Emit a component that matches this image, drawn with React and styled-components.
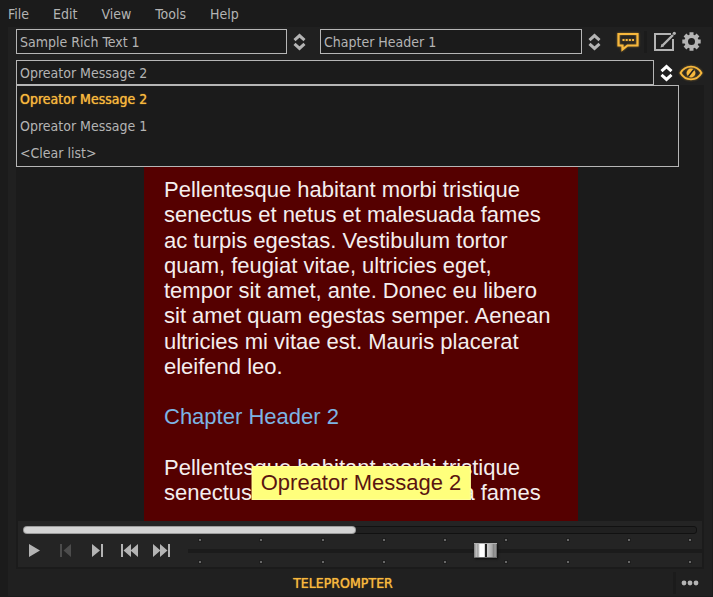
import React, { useState } from "react";
import styled, { createGlobalStyle, css } from "styled-components";

const ui = {
  window: "#1b1b1b",
  panel: "#202020",
  raised: "#242424",
  line: "#b6b6b6",
  text: "#b4b4b4",
  accent: "#f8b83c",
  page: "#550000",
};

const GlobalStyle = createGlobalStyle`
  *, *::before, *::after { box-sizing: border-box; }
  html, body, #root { height: 100%; }
  body {
    margin: 0;
    background: ${ui.window};
    color: ${ui.text};
    font: 14px/20px "DejaVu Sans Condensed", "Noto Sans", sans-serif;
  }
  button, input { font: inherit; color: inherit; }
`;

const Window = styled.div`
  display: flex;
  flex-direction: column;
  min-height: 100%;
  padding: 0 1px 1px 8px;
`;

const MenuBar = styled.nav`
  display: flex;
  gap: 24px;
  height: 27px;
  align-items: center;
`;

const PlainButton = styled.button`
  display: flex;
  align-items: center;
  justify-content: center;
  padding: 0;
  border: 0;
  background: none;
`;

const MenuButton = styled(PlainButton)`
  height: 20px;
`;

const Panel = styled.main`
  display: flex;
  flex: 1;
  flex-direction: column;
  padding: 2px 8px 0;
  background: ${ui.panel};
`;

const ToolRow = styled.div`
  display: flex;
  align-items: center;
  height: 25px;
  margin-bottom: ${(p) => (p.$last ? 0 : 6)}px;
  padding-right: ${(p) => (p.$last ? 1 : 2)}px;
`;

const Combo = styled.div`
  position: relative;
  display: flex;
  flex: ${(p) => p.$grow || 1} 1 0;
  min-width: 0;
  height: 25px;
  margin-right: ${(p) => p.$gap || 0}px;
`;

const ComboInput = styled.input`
  flex: 1;
  min-width: 0;
  padding: 0 3px;
  border: 1px solid ${ui.line};
  border-radius: 0;
  background: ${ui.window};
  outline: none;
`;

const ComboArrows = styled(PlainButton)`
  width: 25px;
  color: ${(p) => (p.$open ? "#ffffff" : ui.text)};
`;

const Options = styled.ul`
  position: absolute;
  z-index: 2;
  top: 100%;
  left: 0;
  right: 0;
  display: grid;
  gap: 1px;
  margin: 0;
  padding: 0;
  border: 1px solid ${ui.line};
  background: ${ui.window};
  list-style: none;
`;

const Option = styled.li`
  padding: 0 3px;
  line-height: 26px;
  cursor: default;
  ${(p) =>
    p.$selected &&
    css`
      color: ${ui.accent};
      text-shadow: 0 0 1px ${ui.accent};
    `}
`;

const IconButton = styled(PlainButton)`
  flex: none;
  width: ${(p) => p.$width}px;
  height: 25px;
  color: ${(p) => (p.$active ? ui.accent : ui.text)};
  svg { ${(p) => p.$active && css`filter: drop-shadow(0 0 1px #f8b83c80);`} }
`;

const Divider = styled.span`
  flex: none;
  width: 3px;
  height: 22px;
  margin-left: 3px;
  background: ${ui.window};
`;

const Viewport = styled.section`
  display: flex;
  flex: 1;
  justify-content: center;
  padding-left: 2px;
  background: ${ui.window};
`;

const Script = styled.article`
  position: relative;
  width: 434px;
  max-width: 100%;
  padding: 92px 20px 16px;
  overflow: hidden;
  background: ${ui.page};
  color: #f4eeee;
  font: 22px/1.15 "Liberation Sans", Arial, sans-serif;
`;

const Paragraph = styled.p`
  margin: 0;
`;

const ChapterTitle = styled.h2`
  margin: 25px 0;
  color: #7cb4e4;
  font: inherit;
`;

const OperatorMessage = styled.div`
  position: absolute;
  bottom: 21px;
  left: 50%;
  transform: translateX(-50%);
  padding: 0 8px;
  border: 1px solid #ffff99;
  background: #ffff7c;
  color: #5a1410;
  line-height: 32px;
  white-space: nowrap;
`;

const Transport = styled.section`
  padding: 5px 0 0;
  border: 2px solid ${ui.window};
  border-top: 0;
  background: ${ui.raised};
`;

const Progress = styled.div`
  height: 8px;
  margin: 0 5px;
  border: 1px solid #111111;
  border-radius: 3px;
  background: #202020;
`;

const ProgressFill = styled.div`
  height: 100%;
  border-radius: 3px;
  background: #d4d4d4;
  box-shadow: 0 0 0 1px #9c9c9c;
`;

const TransportRow = styled.div`
  display: flex;
  align-items: center;
  height: 33px;
`;

const TransportButton = styled(PlainButton)`
  flex: none;
  width: 32px;
  height: 24px;
  color: ${ui.text};
  &:disabled { color: #4c4c4c; }
`;

const Speed = styled.div`
  display: flex;
  flex: 1;
  flex-direction: column;
  gap: 1px;
  min-width: 0;
  margin-left: 10px;
`;

const Ticks = styled.div`
  display: flex;
  justify-content: space-between;
  padding: 0 11px;
`;

const Tick = styled.i`
  width: 2px;
  height: 2px;
  background: #666666;
  box-shadow: 0 0 0 1px #1e1e1e;
`;

const SpeedSlider = styled.input`
  width: 100%;
  height: 18px;
  margin: 0;
  appearance: none;
  background: none;
  &::-webkit-slider-runnable-track {
    height: 4px;
    background: ${ui.window};
  }
  &::-webkit-slider-thumb {
    appearance: none;
    width: 23px;
    height: 15px;
    margin-top: -6px;
    border-top: 1px solid #b0b0b0;
    border-bottom: 1px solid #6a6a6a;
    background: linear-gradient(
      90deg,
      #8c8c8c 0 1px, #c8c8c8 2px, #9c9c9c 4px, #ffffff 6px 10px,
      #b0b0b0 11px, #202020 11px 13px, #d0d0d0 13px, #a8a8a8 18px,
      #7c7c7c 20px, #a8a8a8 21px, #585858 23px
    );
    box-shadow: 1px 1px 2px #0e0e0e;
  }
`;

const Footer = styled.footer`
  display: flex;
  align-items: center;
  height: 27px;
`;

const FooterTitle = styled.strong`
  flex: 1;
  color: ${ui.accent};
  font-weight: 400;
  text-align: center;
  text-shadow: 0 0 1px ${ui.accent};
`;

function Arrows() {
  return (
    <svg width="13" height="18" viewBox="0 0 13 18" fill="none" stroke="currentColor" strokeWidth="3">
      <path d="M1.5 7.2l5-4.6 5 4.6M1.5 10.8l5 4.6 5-4.6" />
    </svg>
  );
}

function ComboBox({ label, value, grow, gap, options }) {
  const [text, setText] = useState(value);
  return (
    <Combo $grow={grow} $gap={gap}>
      <ComboInput aria-label={label} value={text} onChange={(e) => setText(e.target.value)} />
      <ComboArrows type="button" $open={!!options} aria-label={`${label} list`}>
        <Arrows />
      </ComboArrows>
      {options && (
        <Options role="listbox" aria-label={label}>
          {options.map((o) => (
            <Option key={o} role="option" aria-selected={o === text} $selected={o === text} onClick={() => setText(o)}>
              {o}
            </Option>
          ))}
        </Options>
      )}
    </Combo>
  );
}

function MessageIcon() {
  return (
    <svg width="24" height="20" viewBox="0 0 24 20" fill="none" stroke="currentColor">
      <path d="M2.5 2h19v11.5H11.5l-5 4v-4h-4z" strokeWidth="2.2" />
      <path d="M6.5 8h11.5" strokeWidth="2" strokeDasharray="2 1.2" />
    </svg>
  );
}

function EditIcon() {
  return (
    <svg width="24" height="22" viewBox="0 0 24 22" fill="none" stroke="currentColor">
      <path d="M19 3H3v16h18V8" strokeWidth="2" />
      <path d="M10.5 14.5 21 4" strokeWidth="2.4" />
      <path d="M8.5 16.5l1-3.5 2.5 2.5z" fill="currentColor" stroke="none" />
      <circle cx="22.3" cy="2.3" r="1.6" fill="currentColor" stroke="none" />
    </svg>
  );
}

function GearIcon() {
  return (
    <svg width="19" height="19" viewBox="-9.5 -9.5 19 19" fill="none" stroke="currentColor">
      <circle r="5.3" strokeWidth="3.6" />
      {[0, 45, 90, 135].map((a) => (
        <path key={a} d="M0-9.2V-6M0 9.2V6" strokeWidth="4" transform={`rotate(${a})`} />
      ))}
    </svg>
  );
}

function EyeIcon() {
  return (
    <svg width="24" height="18" viewBox="0 0 24 18" fill="none" stroke="currentColor">
      <path d="M1.5 9C6.5 0.6 17.5 0.6 22.5 9 17.5 17.4 6.5 17.4 1.5 9z" strokeWidth="1.8" />
      <circle cx="12" cy="9" r="4.4" fill="currentColor" stroke="none" />
      <path d="M9.3 12.5l5.5-7" stroke="#202020" strokeWidth="1.5" />
    </svg>
  );
}

function MoreIcon() {
  return (
    <svg width="18" height="6" viewBox="0 0 18 6" fill="currentColor">
      <circle cx="3" cy="3" r="2.4" />
      <circle cx="9" cy="3" r="2.4" />
      <circle cx="15" cy="3" r="2.4" />
    </svg>
  );
}

const transport = [
  { name: "Play", d: "M4 1l11 6.5L4 14z" },
  { name: "Previous chapter", d: "M3 1h2v13H3zM14 1v13L6.5 7.5z", disabled: true },
  { name: "Next chapter", d: "M12 1h2v13h-2zM3 1v13l8-6.5z" },
  { name: "First", d: "M0 1h2v13H0zM10 1v13L2.5 7.5zM17 1v13L9.5 7.5z" },
  { name: "Last", d: "M15 1h2v13h-2zM0 1v13l7.5-6.5zM7 1v13l7.5-6.5z" },
];

const lorem =
  "Pellentesque habitant morbi tristique senectus et netus et malesuada fames ac turpis egestas. Vestibulum tortor quam, feugiat vitae, ultricies eget, tempor sit amet, ante. Donec eu libero sit amet quam egestas semper. Aenean ultricies mi vitae est. Mauris placerat eleifend leo.";

export default function App() {
  const [speed, setSpeed] = useState(466);
  const ticks = Array.from({ length: 9 }, (_, i) => <Tick key={i} />);
  return (
    <>
      <GlobalStyle />
      <Window>
        <MenuBar aria-label="Main menu">
          {["File", "Edit", "View", "Tools", "Help"].map((m) => (
            <MenuButton key={m} type="button">{m}</MenuButton>
          ))}
        </MenuBar>
        <Panel>
          <ToolRow>
            <ComboBox label="Text" value="Sample Rich Text 1" grow={296} gap={8} />
            <ComboBox label="Chapter" value="Chapter Header 1" grow={287} gap={8} />
            <IconButton type="button" $width={26} $active aria-label="Operator message"><MessageIcon /></IconButton>
            <Divider />
            <IconButton type="button" $width={34} aria-label="Edit text"><EditIcon /></IconButton>
            <IconButton type="button" $width={21} aria-label="Settings"><GearIcon /></IconButton>
          </ToolRow>
          <ToolRow $last>
            <ComboBox
              label="Message"
              value="Opreator Message 2"
              options={["Opreator Message 2", "Opreator Message 1", "<Clear list>"]}
            />
            <IconButton type="button" $width={24} $active aria-label="Hide message"><EyeIcon /></IconButton>
          </ToolRow>
          <Viewport>
            <Script>
              <Paragraph>{lorem}</Paragraph>
              <ChapterTitle>Chapter Header 2</ChapterTitle>
              <Paragraph>Pellentesque habitant morbi tristique senectus et netus et malesuada fames</Paragraph>
              <OperatorMessage>Opreator Message 2</OperatorMessage>
            </Script>
          </Viewport>
          <Transport>
            <Progress role="progressbar" aria-label="Position" aria-valuenow={49}>
              <ProgressFill style={{ width: "49.3%" }} />
            </Progress>
            <TransportRow>
              {transport.map((t) => (
                <TransportButton key={t.name} type="button" disabled={t.disabled} aria-label={t.name}>
                  <svg width="18" height="15" viewBox="0 0 18 15" fill="currentColor"><path d={t.d} /></svg>
                </TransportButton>
              ))}
              <Speed>
                <Ticks>{ticks}</Ticks>
                <SpeedSlider
                  type="range"
                  min="0"
                  max="800"
                  aria-label="Speed"
                  value={speed}
                  onChange={(e) => setSpeed(Number(e.target.value))}
                />
                <Ticks>{ticks}</Ticks>
              </Speed>
            </TransportRow>
          </Transport>
          <Footer>
            <FooterTitle>TELEPROMPTER</FooterTitle>
            <Divider />
            <IconButton type="button" $width={28} aria-label="More"><MoreIcon /></IconButton>
          </Footer>
        </Panel>
      </Window>
    </>
  );
}
